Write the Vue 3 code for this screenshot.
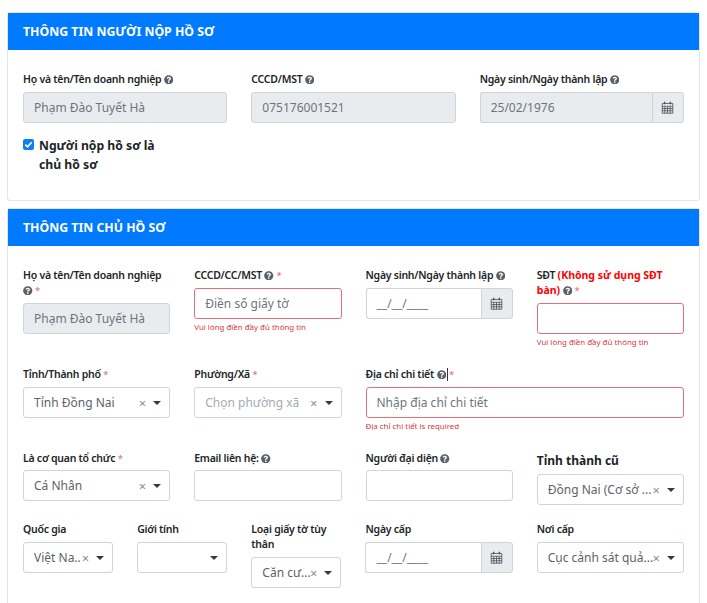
<script setup>
const help = "M504 256c0 136.997-111.043 248-248 248S8 392.997 8 256C8 119.083 119.043 8 256 8s248 111.083 248 248zM262.655 90c-54.497 0-89.255 22.957-116.549 63.758-3.536 5.286-2.353 12.415 2.715 16.258l34.699 26.31c5.205 3.947 12.621 3.008 16.665-2.122 17.864-22.658 30.113-35.797 57.303-35.797 20.429 0 45.698 13.148 45.698 32.958 0 14.976-12.363 22.667-32.534 33.976C247.128 238.528 216 254.941 216 296v4c0 6.627 5.373 12 12 12h56c6.627 0 12-5.373 12-12v-1.333c0-28.462 83.186-29.647 83.186-106.667 0-58.002-60.165-102-116.531-102zM256 338c-25.365 0-46 20.635-46 46 0 25.364 20.635 46 46 46s46-20.636 46-46c0-25.365-20.635-46-46-46z"
const rowA = [
  { label: 'Họ và tên/Tên doanh nghiệp', value: 'Phạm Đào Tuyết Hà' },
  { label: 'CCCD/MST', value: '075176001521' }
]
const rowE = [
  { label: 'Quốc gia', text: 'Việt Na..', clear: true, cls: 's2' },
  { label: 'Giới tính', text: '', clear: false, cls: 's2' },
  { label: 'Loại giấy tờ tùy thân', text: 'Căn cư...', clear: true, cls: 's2' }
]
</script>

<template>
  <div class="page">
    <section class="card first">
      <h2 class="head">THÔNG TIN NGƯỜI NỘP HỒ SƠ</h2>
      <div class="body">
        <div class="row">
          <div v-for="f in rowA" :key="f.label" class="s4">
            <div class="lab">{{ f.label }} <svg class="q" viewBox="0 0 512 512"><path :d="help" /></svg></div>
            <div class="box off">{{ f.value }}</div>
          </div>
          <div class="s4">
            <div class="lab">Ngày sinh/Ngày thành lập <svg class="q" viewBox="0 0 512 512"><path :d="help" /></svg></div>
            <div class="group off">
              <div class="box off flat">25/02/1976</div>
              <div class="addon">
                <svg class="cal" viewBox="0 0 16 16"><path d="M1.5 3h13v12h-13zM1.5 6.5h13M1.5 9.25h13M1.5 12h13M4.7 6.5V15M8 6.5V15M11.3 6.5V15" /><path class="ring" d="M4.5 1v3M11.5 1v3" /></svg>
              </div>
            </div>
          </div>
        </div>
        <div class="row">
          <label class="s3 check">
            <span class="tick"><svg viewBox="0 0 12 12"><path d="M2.5 6.2l2.4 2.4 4.6-5" /></svg></span>
            <span>Người nộp hồ sơ là chủ hồ sơ</span>
          </label>
        </div>
      </div>
    </section>

    <section class="card second">
      <h2 class="head">THÔNG TIN CHỦ HỒ SƠ</h2>
      <div class="body">
        <div class="row">
          <div class="s3">
            <div class="lab">Họ và tên/Tên doanh nghiệp <svg class="q" viewBox="0 0 512 512"><path :d="help" /></svg> <i>*</i></div>
            <div class="box off">Phạm Đào Tuyết Hà</div>
          </div>
          <div class="s3">
            <div class="lab">CCCD/CC/MST <svg class="q" viewBox="0 0 512 512"><path :d="help" /></svg> <i>*</i></div>
            <div class="box bad ph">Điền số giấy tờ</div>
            <div class="err">Vui lòng điền đầy đủ thông tin</div>
          </div>
          <div class="s3">
            <div class="lab">Ngày sinh/Ngày thành lập <svg class="q" viewBox="0 0 512 512"><path :d="help" /></svg></div>
            <div class="group">
              <div class="box flat ph">__/__/____</div>
              <div class="addon">
                <svg class="cal" viewBox="0 0 16 16"><path d="M1.5 3h13v12h-13zM1.5 6.5h13M1.5 9.25h13M1.5 12h13M4.7 6.5V15M8 6.5V15M11.3 6.5V15" /><path class="ring" d="M4.5 1v3M11.5 1v3" /></svg>
              </div>
            </div>
          </div>
          <div class="s3">
            <div class="lab">SĐT <b>(Không sử dụng SĐT bàn)</b> <svg class="q" viewBox="0 0 512 512"><path :d="help" /></svg> <i>*</i></div>
            <div class="box bad"></div>
            <div class="err">Vui lòng điền đầy đủ thông tin</div>
          </div>
        </div>

        <div class="row">
          <div class="s3">
            <div class="lab">Tỉnh/Thành phố <i>*</i></div>
            <div class="box sel"><span class="val">Tỉnh Đồng Nai</span><span class="x">×</span><span class="caret"></span></div>
          </div>
          <div class="s3">
            <div class="lab">Phường/Xã <i>*</i></div>
            <div class="box sel"><span class="val muted">Chọn phường xã</span><span class="x">×</span><span class="caret"></span></div>
          </div>
          <div class="s6">
            <div class="lab">Địa chỉ chi tiết <svg class="q" viewBox="0 0 512 512"><path :d="help" /></svg><span class="cursor"></span><i>*</i></div>
            <div class="box bad ph">Nhập địa chỉ chi tiết</div>
            <div class="err">Địa chỉ chi tiết is required</div>
          </div>
        </div>

        <div class="row r4">
          <div class="s3">
            <div class="lab">Là cơ quan tổ chức <i>*</i></div>
            <div class="box sel"><span class="val">Cá Nhân</span><span class="x">×</span><span class="caret"></span></div>
          </div>
          <div class="s3">
            <div class="lab">Email liên hệ: <svg class="q" viewBox="0 0 512 512"><path :d="help" /></svg></div>
            <div class="box"></div>
          </div>
          <div class="s3">
            <div class="lab">Người đại diện <svg class="q" viewBox="0 0 512 512"><path :d="help" /></svg></div>
            <div class="box"></div>
          </div>
          <div class="s3">
            <div class="lab big">Tỉnh thành cũ</div>
            <div class="box sel"><span class="val">Đồng Nai (Cơ sở ...</span><span class="x">×</span><span class="caret"></span></div>
          </div>
        </div>

        <div class="row">
          <div v-for="f in rowE" :key="f.label" :class="f.cls">
            <div class="lab">{{ f.label }}</div>
            <div class="box sel"><span class="val">{{ f.text }}</span><span v-if="f.clear" class="x">×</span><span class="caret"></span></div>
          </div>
          <div class="s3">
            <div class="lab">Ngày cấp</div>
            <div class="group">
              <div class="box flat ph">__/__/____</div>
              <div class="addon">
                <svg class="cal" viewBox="0 0 16 16"><path d="M1.5 3h13v12h-13zM1.5 6.5h13M1.5 9.25h13M1.5 12h13M4.7 6.5V15M8 6.5V15M11.3 6.5V15" /><path class="ring" d="M4.5 1v3M11.5 1v3" /></svg>
              </div>
            </div>
          </div>
          <div class="s3">
            <div class="lab">Nơi cấp</div>
            <div class="box sel"><span class="val">Cục cảnh sát quả...</span><span class="x">×</span><span class="caret"></span></div>
          </div>
        </div>
      </div>
    </section>
  </div>
</template>

<style scoped>
.page {
  height: 603px;
  overflow: hidden;
  padding: 12px 7px 0;
  box-sizing: border-box;
  background: #fff;
  font-family: "Noto Sans", "Open Sans", sans-serif;
  color: #212529;
}
.card {
  border: 1px solid #e3e5e8;
  border-radius: 3px;
  background: #fff;
}
.first { height: 189px; box-sizing: border-box; margin-bottom: 7px; }
.second { min-height: 420px; }
.head {
  margin: 0;
  height: 37px;
  padding: 0 15px;
  background: #007bff;
  color: #fff;
  font-size: 12.3px;
  font-weight: 700;
  line-height: 37px;
  white-space: nowrap;
}
.body { padding: 22px 15px 0; }
.row {
  display: grid;
  grid-template-columns: repeat(12, 1fr);
  column-gap: 24px;
  align-items: start;
  margin-bottom: 18px;
}
.r4 { margin-bottom: 17px; }
.s2 { grid-column: span 2; min-width: 0; }
.s3 { grid-column: span 3; min-width: 0; }
.s4 { grid-column: span 4; min-width: 0; }
.s6 { grid-column: span 6; min-width: 0; }
.lab {
  margin-bottom: 5px;
  font-size: 10.5px;
  letter-spacing: -0.25px;
  font-weight: 600;
  line-height: 15px;
  color: #212529;
}
.r4 .lab { margin-bottom: 4px; }
.lab b { color: #f00; font-weight: 700; font-size: 10.5px; letter-spacing: 0; line-height: 1; }
.lab i { color: #e4606d; font-style: normal; font-weight: 400; font-size: 9.5px; line-height: 1; }
.r4 .lab.big { margin-top: 2px; margin-bottom: 6px; font-size: 12px; letter-spacing: 0; font-weight: 700; line-height: 15px; }
.q { width: 9.5px; height: 9.5px; fill: #5a6268; vertical-align: -1px; }
.cursor {
  display: inline-block;
  width: 1px;
  height: 13px;
  margin: 0 1px;
  background: #333;
  vertical-align: -3px;
}
.box {
  height: 31px;
  box-sizing: border-box;
  display: flex;
  align-items: center;
  padding: 0 10px;
  border: 1px solid #ced4da;
  border-radius: 3px;
  background: #fff;
  font-size: 12px;
  color: #5c636a;
  white-space: nowrap;
}
.box.off { background: #e9ecef; color: #6c757d; }
.box.ph { color: #6c757d; }
.box.bad { border-color: #e2707c; }
.err { margin-top: 2px; font-size: 7.9px; line-height: 13px; color: #dc3545; }
.group { display: flex; }
.group .flat { flex: 1; min-width: 0; border-right: 0; border-radius: 3px 0 0 3px; }
.addon {
  width: 32px;
  height: 31px;
  box-sizing: border-box;
  display: flex;
  align-items: center;
  justify-content: center;
  background: #e9ecef;
  border: 1px solid #ced4da;
  border-radius: 0 3px 3px 0;
}
.cal { width: 13px; height: 13px; fill: none; stroke: #495057; stroke-width: 1; }
.cal .ring { stroke-width: 1.6; }
.sel { padding-right: 8px; }
.val { flex: 1; min-width: 0; overflow: hidden; }
.val.muted { color: #a4abb2; }
.x { font-size: 13px; color: #868e96; }
.caret {
  width: 0;
  height: 0;
  margin-left: 7px;
  border-left: 4px solid transparent;
  border-right: 4px solid transparent;
  border-top: 4px solid #343a40;
}
.check {
  display: flex;
  gap: 5px;
  margin-top: -5px;
  font-size: 12.2px;
  font-weight: 700;
  line-height: 19px;
}
.tick {
  flex: none;
  width: 11px;
  height: 11px;
  margin-top: 3px;
  border-radius: 2px;
  background: #0d7ff2;
}
.tick svg { display: block; fill: none; stroke: #fff; stroke-width: 1.8; }
</style>

<style>
html, body { margin: 0; overflow: hidden; background: #fff; }
</style>
